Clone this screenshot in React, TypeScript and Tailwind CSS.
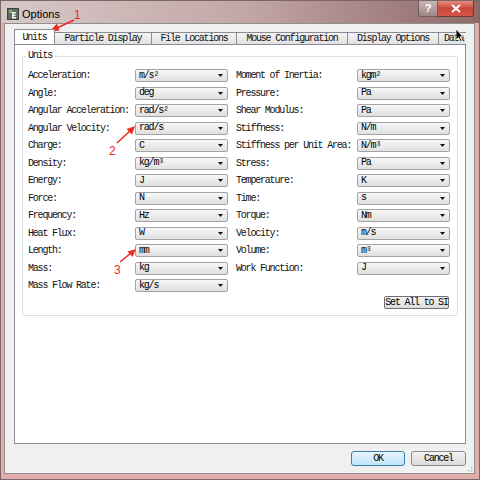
import React from 'react';

const left: [string, string][] = [
  ['Acceleration:', 'm/s²'],
  ['Angle:', 'deg'],
  ['Angular Acceleration:', 'rad/s²'],
  ['Angular Velocity:', 'rad/s'],
  ['Charge:', 'C'],
  ['Density:', 'kg/m³'],
  ['Energy:', 'J'],
  ['Force:', 'N'],
  ['Frequency:', 'Hz'],
  ['Heat Flux:', 'W'],
  ['Length:', 'mm'],
  ['Mass:', 'kg'],
  ['Mass Flow Rate:', 'kg/s'],
];

const right: [string, string][] = [
  ['Moment of Inertia:', 'kgm²'],
  ['Pressure:', 'Pa'],
  ['Shear Modulus:', 'Pa'],
  ['Stiffness:', 'N/m'],
  ['Stiffness per Unit Area:', 'N/m³'],
  ['Stress:', 'Pa'],
  ['Temperature:', 'K'],
  ['Time:', 's'],
  ['Torque:', 'Nm'],
  ['Velocity:', 'm/s'],
  ['Volume:', 'm³'],
  ['Work Function:', 'J'],
];

function Combo({ value }: { value: string }) {
  return (
    <div className="flex h-[13px] w-[93px] items-center justify-between rounded-[2px] border border-[#a3a3a3] bg-linear-to-b from-[#f7f7f7] to-[#e0e0e0] pl-[3px] pr-[4px]">
      <span className="leading-none text-black">{value}</span>
      <svg width="5" height="3" viewBox="0 0 5 3">
        <path d="M0 0h5L2.5 3z" fill="#111" />
      </svg>
    </div>
  );
}

function Row({ label, value, labelClass }: { label: string; value: string; labelClass: string }) {
  return (
    <div className="flex h-[17.5px] items-center">
      <span className={labelClass}>{label}</span>
      <Combo value={value} />
    </div>
  );
}

function Tab({ label, width, active }: { label: string; width: string; active?: boolean }) {
  if (active) {
    return (
      <div className={`relative z-10 -mb-px flex h-[16px] shrink-0 items-center justify-center border border-b-0 border-[#898c95] bg-white ${width}`}>
        {label}
      </div>
    );
  }
  return (
    <div className={`flex h-[12px] shrink-0 items-center justify-center border border-b-0 border-l-0 border-[#898c95] bg-linear-to-b from-[#f3f3f3] to-[#e1e1e1] ${width}`}>
      {label}
    </div>
  );
}

export default function App() {
  return (
    <div className="relative flex h-[480px] w-[480px] flex-col overflow-hidden border border-[#7d6666] bg-[#e2adad] font-['Liberation_Mono',monospace] text-[10px] tracking-[-1.2px] text-[#111]">
      {/* title bar */}
      <div className="flex h-[22px] items-start bg-linear-to-r from-[#d6c8c8] via-[#c4a8a8] to-[#8f6a68]">
        <div className="ml-[6px] mt-[5px] flex items-center gap-[3px]">
          <svg width="12" height="12" viewBox="0 0 12 12">
            <rect x="0.5" y="0.5" width="11" height="11" fill="#5f6a62" stroke="#3d443f" />
            <rect x="2" y="2" width="3" height="3" fill="#7ec24a" />
            <path d="M5 4h4v1.5H6.5v1H8.5v1.5H6.5v1H9V10.5H5z" fill="#f4f4f4" />
          </svg>
          <span className="font-['Liberation_Sans',sans-serif] text-[11px] tracking-normal text-black">Options</span>
        </div>
        <div className="ml-auto mr-[5px] flex">
          <div className="flex h-[16px] w-[20px] items-center justify-center rounded-bl-[3px] border border-t-0 border-[#6d5a5a] bg-linear-to-b from-[#c9b7b7] to-[#9e8686] font-['Liberation_Sans',sans-serif] text-[11px] font-bold tracking-normal text-white">
            ?
          </div>
          <div className="flex h-[16px] w-[36px] items-center justify-center rounded-br-[3px] border border-l-0 border-t-0 border-[#6d3a34] bg-linear-to-b from-[#e98d7f] via-[#c8473a] to-[#d4584a]">
            <svg width="10" height="9" viewBox="0 0 10 9">
              <path d="M1 1l8 7M9 1L1 8" stroke="#fff" strokeWidth="2" />
            </svg>
          </div>
        </div>
      </div>

      {/* client */}
      <div className="mb-[5px] ml-[3px] mr-[4px] flex flex-1 flex-col border border-[#8f8f8f] bg-[#f0f0f0] pb-[7px] pl-[9px] pr-[8px] pt-[5px]">
        <div className="flex h-[15px] w-[452px] items-end overflow-hidden">
          <Tab label="Units" width="w-[41px]" active />
          <Tab label="Particle Display" width="w-[97px]" />
          <Tab label="File Locations" width="w-[85px]" />
          <Tab label="Mouse Configuration" width="w-[111px]" />
          <Tab label="Display Options" width="w-[91px]" />
          <div className="flex h-[12px] w-[40px] shrink-0 items-center border border-b-0 border-l-0 border-[#898c95] bg-linear-to-b from-[#f3f3f3] to-[#e1e1e1] pl-[5px]">
            Data
          </div>
        </div>
        <div className="h-[400px] w-[452px] border border-[#898c95] bg-white">
          <fieldset className="mx-[7px] mt-[5px] rounded-[3px] border border-[#d5dfe5] px-[5px] pb-[6px]">
            <legend className="-ml-[2px] px-[2px] leading-[12px]">Units</legend>
            <div className="flex gap-[8px] pt-[5px]">
              <div className="flex flex-col">
                {left.map(([l, v]) => (
                  <Row key={l} label={l} value={v} labelClass="w-[107px]" />
                ))}
              </div>
              <div className="flex flex-col">
                {right.map(([l, v]) => (
                  <Row key={l} label={l} value={v} labelClass="w-[121px]" />
                ))}
                <div className="mt-[19px] flex justify-end pr-[1px]">
                  <button className="flex h-[13px] w-[65px] items-center justify-center rounded-[2px] border border-[#707070] bg-linear-to-b from-[#f4f4f4] to-[#dcdcdc] text-black">
                    Set All to SI
                  </button>
                </div>
              </div>
            </div>
          </fieldset>
        </div>
        <div className="mt-[7px] flex justify-end gap-[6px]">
          <button className="flex h-[15px] w-[54px] items-center justify-center rounded-[3px] border border-[#3c7fb1] bg-linear-to-b from-[#eaf6fd] to-[#bfe4f8] text-black">
            OK
          </button>
          <button className="flex h-[15px] w-[55px] items-center justify-center rounded-[3px] border border-[#8a8a8a] bg-linear-to-b from-[#f3f3f3] to-[#dadada] text-black">
            Cancel
          </button>
        </div>
      </div>

      {/* annotations + cursor overlay */}
      <svg className="pointer-events-none absolute left-[-1px] top-[-1px]" width="480" height="480" viewBox="0 0 480 480">
        <g stroke="#ee2a24" strokeWidth="1.6" fill="#ee2a24">
          <line x1="74" y1="20" x2="55" y2="29" />
          <path d="M49 32l8-8.5 2.5 7z" stroke="none" />
          <line x1="117" y1="143" x2="130" y2="131" />
          <path d="M135 126l-3 8.5-5.5-5.5z" stroke="none" />
          <line x1="120" y1="262" x2="131" y2="253" />
          <path d="M136 249l-3.5 8-5-5.5z" stroke="none" />
        </g>
        <g fill="#ee2a24" fontFamily="Liberation Sans, sans-serif" fontSize="12">
          <text x="74" y="19">1</text>
          <text x="109" y="155">2</text>
          <text x="114" y="274">3</text>
        </g>
        <path d="M456 29v11l2.5-2.5 2 4 1.5-.7-2-4H463z" fill="#000" stroke="#fff" strokeWidth="0.8" />
        <g fill="#b5b5b5">
          <rect x="471" y="467" width="1.5" height="1.5" />
          <rect x="468" y="470" width="1.5" height="1.5" />
          <rect x="471" y="470" width="1.5" height="1.5" />
        </g>
      </svg>
    </div>
  );
}
